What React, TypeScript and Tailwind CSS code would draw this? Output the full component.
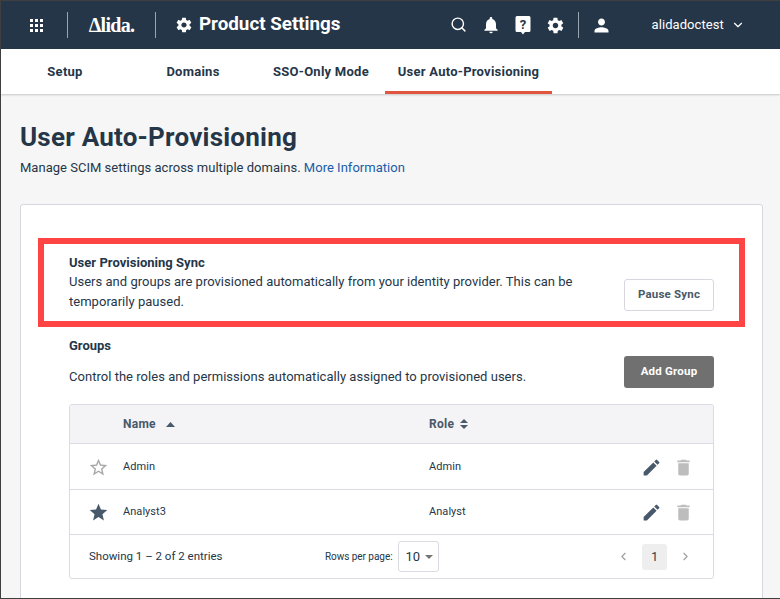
import { ChevronDown, ChevronLeft, ChevronRight, Search } from 'lucide-react';
import { IoMdSettings } from 'react-icons/io';
import { MdDelete, MdEdit, MdNotifications, MdPerson, MdStar, MdStarBorder } from 'react-icons/md';

const tabs = [
  { label: 'Setup', cls: 'w-[128px]' },
  { label: 'Domains', cls: 'w-[128px]' },
  { label: 'SSO-Only Mode', cls: 'w-[128px]' },
  { label: 'User Auto-Provisioning', cls: 'w-[167px]', active: true },
];

function Grid() {
  return (
    <div className="grid grid-cols-3 gap-[2px]">
      {Array.from({ length: 9 }).map((_, i) => (
        <div key={i} className="h-[3px] w-[3px] bg-white" />
      ))}
    </div>
  );
}

function HelpIcon() {
  return (
    <svg width="16" height="20" viewBox="0 0 16 20">
      <path d="M2 1h12a1.5 1.5 0 0 1 1.5 1.500v13a1.500 1.500 0 0 1-1.500 1.500H10l-2 2.500L6 17H2a1.500 1.500 0 0 1-1.500-1.500v-13A1.500 1.500 0 0 1 2 1z" fill="#fff" />
      <text x="8" y="14" textAnchor="middle" fontSize="13" fontWeight="700" fontFamily="Roboto, sans-serif" fill="#253648">?</text>
    </svg>
  );
}

function Row({ name, role, starred, h }: { name: string; role: string; starred?: boolean; h: string }) {
  return (
    <div className={`flex ${h} items-center border-b border-[#dcdbe3] pr-[19px] text-[11px] leading-[16px] tracking-[0.05px] text-[#253648]`}>
      <div className="flex w-[53px] justify-center pl-[3px]">
        {starred ? <MdStar size={21} className="text-[#48596b]" /> : <MdStarBorder size={21} className="text-[#a8a8a8]" />}
      </div>
      <div className="w-[306px]">{name}</div>
      <div className="flex-1">{role}</div>
      <MdEdit size={21} className="mr-[11px] text-[#48596b]" />
      <MdDelete size={21} className="text-[#bdbdbd]" />
    </div>
  );
}

export default function App() {
  return (
    <div className="h-[599px] w-[780px] overflow-hidden border border-r-0 border-[#3f3f3f] bg-[#f6f6f6] font-['Roboto',sans-serif] text-[#253648]">
      <header className="flex h-[48px] items-center bg-[#253648] text-white">
        <div className="flex w-[66px] justify-center pl-[5px]">
          <Grid />
        </div>
        <div className="h-[26px] w-px bg-[#9aa5b0]" />
        <div className="flex w-[87px] justify-center font-['Liberation_Serif',serif] text-[20px] font-bold tracking-[-0.7px]">Δlida.</div>
        <div className="h-[26px] w-px bg-[#9aa5b0]" />
        <IoMdSettings size={18} className="ml-[19px]" />
        <div className="ml-[6px] pb-[2px] text-[18.8px] font-bold leading-[24px]">Product Settings</div>
        <Search size={17} strokeWidth={2} className="ml-[109px] mb-[1px]" />
        <MdNotifications size={20} className="ml-[14px]" />
        <div className="ml-[14px] flex">
          <HelpIcon />
        </div>
        <IoMdSettings size={19} className="ml-[15px]" />
        <div className="ml-[13px] h-[26px] w-px bg-[#9aa5b0]" />
        <MdPerson size={21} className="ml-[12px]" />
        <div className="ml-[40px] text-[13px] tracking-[0.08px]">alidadoctest</div>
        <ChevronDown size={14} className="ml-[7px]" />
      </header>

      <nav className="flex h-[45px] bg-white text-[13px] font-bold tracking-[0.25px] shadow-[0_1px_2px_rgba(0,0,0,0.2)]">
        {tabs.map((t) => (
          <div key={t.label} className={`flex items-center justify-center ${t.cls} ${t.active ? 'border-b-[3px] border-[#e2563f] pt-[3px]' : ''}`}>
            {t.label}
          </div>
        ))}
      </nav>

      <main className="relative px-[19px] pt-[26px]">
        <h1 className="text-[26px] leading-[34px] font-bold tracking-[0.23px]">User Auto-Provisioning</h1>
        <p className="mt-[4px] text-[13px] leading-[20px] tracking-[0.02px]">
          Manage SCIM settings across multiple domains. <span className="text-[#1a5ca8]">More Information</span>
        </p>

        <section className="mt-[26px] h-[420px] w-[743px] rounded-[3px] border border-[#d8d7e0] bg-white px-[48px] pt-[49px]">
          <div className="flex items-end justify-between">
            <div className="w-[530px] text-[13px] leading-[20px] tracking-[0.025px]">
              <div className="font-bold leading-[18px]">User Provisioning Sync</div>
              <div>Users and groups are provisioned automatically from your identity provider. This can be temporarily paused.</div>
            </div>
            <button className="mb-[1px] h-[32px] w-[90px] rounded-[3px] border border-[#d8d7e0] bg-white text-[11.5px] font-bold tracking-[0.2px] text-[#48596b]">Pause Sync</button>
          </div>

          <div className="mt-[25px] text-[13px] font-bold leading-[18px]">Groups</div>
          <div className="mt-[1px] flex items-end justify-between">
            <div className="pb-[1px] text-[13px] leading-[20px] tracking-[0.03px]">Control the roles and permissions automatically assigned to provisioned users.</div>
            <button className="h-[32px] w-[90px] rounded-[3px] bg-[#707070] text-[11.5px] font-bold tracking-[0.2px] text-white">Add Group</button>
          </div>

          <div className="mt-[16px] rounded-[3px] border border-[#dcdbe3]">
            <div className="flex h-[39px] items-center rounded-t-[3px] border-b border-[#dcdbe3] bg-[#f4f3f5] text-[12px] font-bold tracking-[0.25px] text-[#48596b]">
              <div className="flex w-[359px] items-center pl-[53px]">
                Name
                <svg width="9" height="5" viewBox="0 0 9 5" className="ml-[10px]">
                  <path d="M4.500 0L9 5H0z" fill="#48596b" />
                </svg>
              </div>
              <div className="flex items-center">
                Role
                <svg width="8" height="10" viewBox="0 0 8 10" className="ml-[6px]">
                  <path d="M4 0l4 4H0zM4 10L0 6h8z" fill="#48596b" />
                </svg>
              </div>
            </div>
            <Row name="Admin" role="Admin" h="h-[46px] pt-[1px]" />
            <Row name="Analyst3" role="Analyst" starred h="h-[45px]" />
            <div className="flex h-[43px] items-center pl-[19px] pr-[21px]">
              <div className="w-[236px] text-[11.5px]">Showing 1 – 2 of 2 entries</div>
              <div className="text-[10px] tracking-[-0.05px]">Rows per page:</div>
              <div className="ml-[5px] flex h-[31px] w-[41px] items-center gap-[5px] rounded-[3px] border border-[#dcdbe3] pl-[7px] text-[13px]">
                10
                <svg width="8" height="4" viewBox="0 0 8 4">
                  <path d="M0 0h8L4 4z" fill="#757575" />
                </svg>
              </div>
              <ChevronLeft size={13} className="ml-auto text-[#9e9e9e]" />
              <div className="ml-[12px] mr-[12px] flex h-[26px] w-[25px] items-center justify-center rounded-[3px] bg-[#eeeeee] text-[12px]">1</div>
              <ChevronRight size={13} className="text-[#9e9e9e]" />
            </div>
          </div>
        </section>

        {/* annotation drawn over the screenshot */}
        <div className="absolute left-[37px] top-[144px] h-[89px] w-[707px] border-[6px] border-[#ff4444]" />
      </main>
    </div>
  );
}
